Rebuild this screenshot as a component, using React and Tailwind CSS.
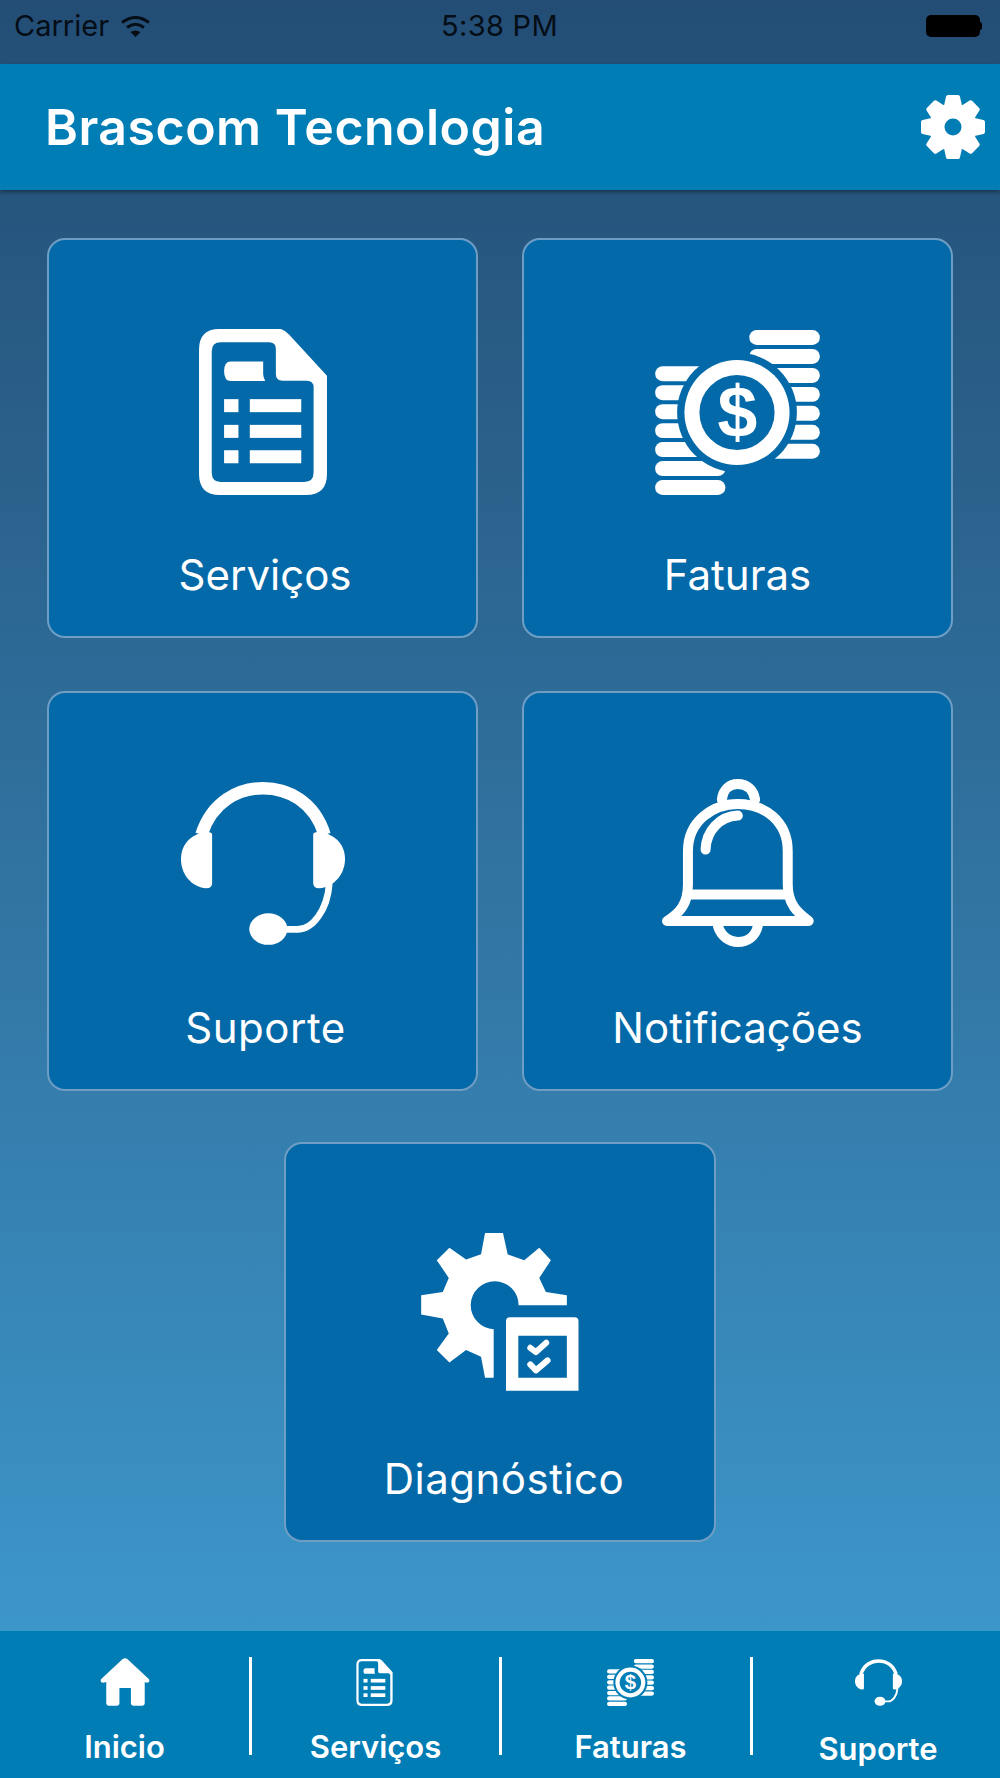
const CARD_BG = "#0369a8";
const BAR_BG = "#007db5";

// eight-tooth gear for the header button
function gearPath() {
  const pts = [];
  for (let i = 0; i < 8; i++) {
    const a = (i * Math.PI) / 4;
    const at = (r, off) => {
      const x = 32 + r * Math.sin(a) + off * Math.cos(a);
      const y = 32 - r * Math.cos(a) + off * Math.sin(a);
      return `${x.toFixed(2)} ${y.toFixed(2)}`;
    };
    pts.push(at(21, -7), at(30, -5), at(30, 5), at(21, 7));
  }
  return `M${pts.join("L")}Z`;
}

function GearIcon({ className }) {
  return (
    <svg viewBox="0 0 64 64" className={className}>
      <path d={gearPath()} fill="#fff" stroke="#fff" strokeWidth="4" strokeLinejoin="round" />
      <circle cx="32" cy="32" r="8.5" fill={BAR_BG} />
    </svg>
  );
}

function DocIcon({ className, thin }) {
  return (
    <svg viewBox="85 55 383 497" className={className} fill="#fff">
      <path
        fillRule="evenodd"
        d={
          thin
            ? "M145 55H330Q345 60 355 72L468 195V490Q468 552 405 552H147Q85 552 85 490V117Q85 55 145 55ZM140 80Q108 80 108 112V495Q108 527 140 527H410Q443 527 443 495V225Q443 205 420 205H335Q315 205 315 185V100Q315 80 295 80Z"
            : "M145 55H330Q345 60 355 72L468 195V490Q468 552 405 552H147Q85 552 85 490V117Q85 55 145 55ZM150 95Q123 95 123 122V485Q123 513 150 513H400Q428 513 428 485V230Q428 210 408 210H335Q315 210 315 190V115Q315 95 295 95Z"
        }
      />
      <path d="M180 152H277V190Q277 200 283 211H180Q160 211 160 181Q160 152 180 152Z" />
      <rect x="160" y="265" width="43" height="39" />
      <rect x="237" y="265" width="154" height="39" />
      <rect x="160" y="342" width="43" height="39" />
      <rect x="237" y="342" width="154" height="39" />
      <rect x="160" y="418" width="43" height="39" />
      <rect x="237" y="418" width="154" height="39" />
    </svg>
  );
}

function CoinsIcon({ className, bg }) {
  const right = [57, 114, 171, 228, 285, 342, 399];
  const left = [166, 223, 280, 337, 394, 451, 508];
  return (
    <svg viewBox="45 57 495 496" className={className} fill="#fff">
      {right.map((y) => (
        <rect key={y} x="328" y={y} width="212" height="45" rx="22" />
      ))}
      {left.map((y) => (
        <rect key={y} x="45" y={y} width="211" height="45" rx="22" />
      ))}
      <circle cx="291" cy="305" r="180" fill={bg} />
      <circle cx="291" cy="305" r="158" />
      <circle cx="291" cy="305" r="113" fill={bg} />
      <text
        x="292"
        y="378"
        fontSize="215"
        fontWeight="700"
        textAnchor="middle"
        fontFamily="'Liberation Sans', sans-serif"
      >
        $
      </text>
    </svg>
  );
}

function HeadsetIcon({ className }) {
  return (
    <svg viewBox="37 38 490 486" className={className} fill="#fff">
      <path
        d="M98 195C130 95 210 56 282 56C355 56 435 95 466 195"
        fill="none"
        stroke="#fff"
        strokeWidth="37"
      />
      <path d="M130 195V340Q130 355 112 355C65 350 37 310 37 268C37 228 62 195 110 187Q130 185 130 195Z" />
      <path d="M432 195V340Q432 355 450 355C497 350 527 310 527 268C527 228 502 195 452 187Q432 185 432 195Z" />
      <path
        d="M480 340C475 420 430 478 385 478H340"
        fill="none"
        stroke="#fff"
        strokeWidth="20"
      />
      <ellipse cx="298" cy="477" rx="57" ry="47" />
    </svg>
  );
}

function BellIcon({ className }) {
  return (
    <svg
      viewBox="35 23 458 505"
      className={className}
      fill="none"
      stroke="#fff"
      strokeWidth="30"
      strokeLinecap="round"
      strokeLinejoin="round"
    >
      <path d="M52 450C90 425 115 400 115 340V240C115 150 190 98 265 98C345 98 415 150 415 240V340C415 400 445 425 478 450Z" />
      <path d="M115 370H415" />
      <path d="M217 85C220 55 240 38 265 38C292 38 312 55 317 85" />
      <path d="M205 465C215 497 240 513 265 513C293 513 318 497 325 465" />
      <path d="M168 235C170 180 210 135 265 133" />
    </svg>
  );
}

function DiagIcon({ className }) {
  return (
    <svg viewBox="30 33 474 475" className={className} fill="#fff">
      <path d="M222 33H276L290 97L340 115L385 77L420 115L385 168L405 210L468 220V250H323A72 72 0 1 0 248 322V468H222L210 405L165 385L115 422L77 385L113 335L95 290L30 278V220L95 210L113 168L77 115L115 77L165 113L210 97Z" />
      <path
        fillRule="evenodd"
        d="M297 286H491Q503 286 503 298V507H285V298Q285 286 297 286ZM322 342V468H468V342Z"
      />
      <path
        d="M358 378L375 391L406 363M358 428L375 446L410 416"
        fill="none"
        stroke="#fff"
        strokeWidth="18"
        strokeLinecap="round"
        strokeLinejoin="round"
      />
    </svg>
  );
}

function HomeIcon({ className }) {
  return (
    <svg viewBox="300 117 150 146" className={className} fill="#fff">
      <path d="M302 182L368 120Q375 115 382 120L448 182Q452 192 440 192L435 190V255Q435 262 428 262H400Q393 262 393 255V208H358V255Q358 262 350 262H325Q318 262 318 255V190L310 192Q298 192 302 182Z" />
    </svg>
  );
}

function Card({ icon, label, className = "", labelClass = "" }) {
  return (
    <div
      className={`h-[400px] flex flex-col items-center pt-[87px] rounded-[18px] border-2 border-[#6f9ec4] bg-[#0369a8] ${className}`}
    >
      <div className="h-[170px] flex items-center justify-center">{icon}</div>
      <div className={`mt-[52px] text-[42px] leading-[52px] text-white ${labelClass}`}>{label}</div>
    </div>
  );
}

function Tab({ icon, label, className = "", labelClass = "mt-[22px]" }) {
  return (
    <div className={`flex flex-col items-center ${className}`}>
      <div className="h-[50px] flex items-center justify-center">{icon}</div>
      <div className={`${labelClass} text-[31px] leading-[36px] font-semibold text-white`}>{label}</div>
    </div>
  );
}

function TabDivider() {
  return <div className="w-[3px] h-[98px] bg-white shrink-0" />;
}

export default function App() {
  return (
    <div className="h-[1778px] w-[1000px] flex flex-col overflow-hidden bg-gradient-to-b from-[#234d74] to-[#3f9dd2] font-['Inter',sans-serif]">
      {/* status bar */}
      <div className="h-[64px] flex items-center justify-between pl-[14px] pr-[18px] pb-[12px] text-[29px] text-[#050d16]">
        <div className="w-[320px] flex items-center gap-[12px]">
          <span>Carrier</span>
          <svg viewBox="0 0 29 21" className="w-[29px] h-[21px]" fill="#050d16">
            <path d="M1 6.5Q14.5 -3.5 28 6.5M6 11.5Q14.5 5 23 11.5" fill="none" stroke="#050d16" strokeWidth="3" />
            <path d="M9.5 16L14.5 21L19.5 16Q14.5 13 9.5 16Z" />
          </svg>
        </div>
        <span className="tracking-[0.3px] pl-[3px]">5:38 PM</span>
        <div className="w-[320px] flex items-center justify-end">
          <div className="w-[54px] h-[22px] rounded-[5px] bg-black" />
          <div className="w-[2px] h-[8px] rounded-r bg-black" />
        </div>
      </div>

      {/* header */}
      <div className="h-[126px] flex items-center justify-between pl-[45px] pr-[15px] bg-[#007db5] shadow-[0_2px_4px_rgba(0,0,0,0.4)]">
        <h1 className="text-[50px] leading-[60px] font-semibold tracking-[0.5px] text-white">Brascom Tecnologia</h1>
        <GearIcon className="w-[64px] h-[64px]" />
      </div>

      {/* menu */}
      <div className="grid grid-cols-2 gap-x-[44px] gap-y-[53px] px-[47px] pt-[48px]">
        <Card icon={<DocIcon className="w-[128px] h-[166px]" />} label="Serviços" labelClass="pl-[5px]" />
        <Card icon={<CoinsIcon className="w-[165px] h-[165px]" bg={CARD_BG} />} label="Faturas" />
        <Card
          icon={<HeadsetIcon className="w-[164px] h-[163px] mb-[4px]" />}
          label="Suporte"
          labelClass="pl-[6px] tracking-[0.5px]"
        />
        <Card icon={<BellIcon className="w-[153px] h-[168px] mb-[5px]" />} label="Notificações" />
        <Card
          icon={<DiagIcon className="w-[158px] h-[158px] mb-[8px]" />}
          label="Diagnóstico"
          className="col-span-2 w-[432px] justify-self-center -mt-[2px]"
          labelClass="pl-[8px] tracking-[0.5px]"
        />
      </div>

      {/* tab bar */}
      <div className="mt-auto h-[147px] flex items-start pt-[26px] bg-[#007db5]">
        <Tab icon={<HomeIcon className="w-[50px] h-[48px]" />} label="Inicio" className="w-[249px]" />
        <TabDivider />
        <Tab icon={<DocIcon thin className="w-[37px] h-[47px] mr-[2px]" />} label="Serviços" className="w-[247px]" />
        <TabDivider />
        <Tab
          icon={<CoinsIcon className="w-[47px] h-[47px]" bg={BAR_BG} />}
          label="Faturas"
          className="w-[248px] pl-[9px]"
        />
        <TabDivider />
        <Tab
          icon={<HeadsetIcon className="w-[47px] h-[47px]" />}
          label="Suporte"
          className="flex-1 pl-[3px]"
          labelClass="mt-[24px]"
        />
      </div>
    </div>
  );
}
